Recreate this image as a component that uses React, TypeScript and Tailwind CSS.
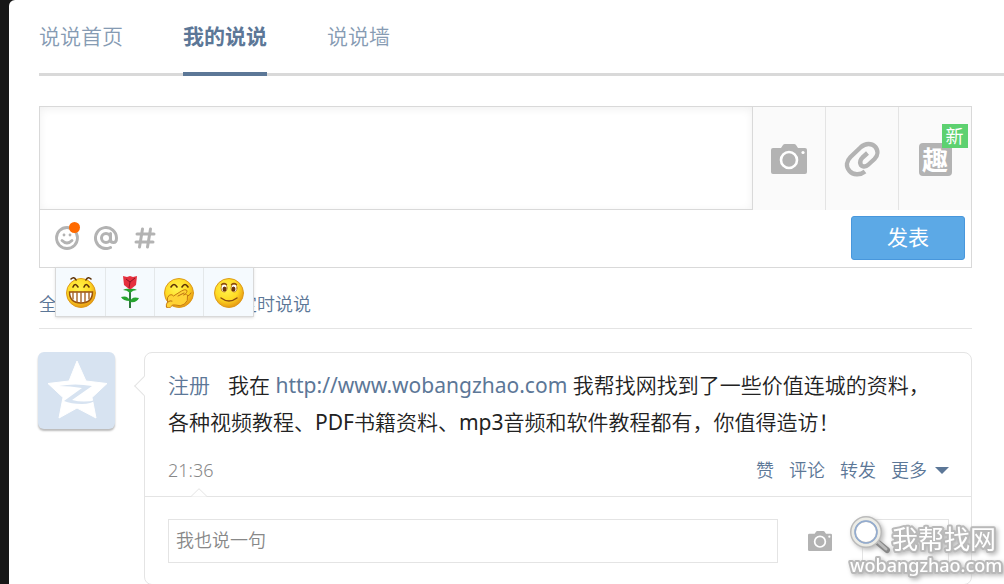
import type { ReactNode } from "react";

const tabs = [
  { label: "说说首页", active: false },
  { label: "我的说说", active: true },
  { label: "说说墙", active: false },
];

const filters = ["全部说说", "私密说说", "定时说说"];
const actions = ["赞", "评论", "转发"];

function CameraIcon({ className }: { className: string }) {
  return (
    <svg className={className} viewBox="0 0 36 32" fill="#b3b3b3">
      <path d="M2 5h8l2-3q.6-1 2-1h9q1.400 0 2 1l2 3h7q2 0 2 2v22q0 2-2 2H2q-2 0-2-2V7q0-2 2-2Z" />
      <circle cx="18" cy="17" r="8" fill="none" stroke="#fff" strokeWidth="2.600" />
      <circle cx="32" cy="9.500" r="1.600" fill="#fff" />
    </svg>
  );
}

function ClipIcon() {
  return (
    <svg className="h-9 w-9" viewBox="0 0 36 36" fill="none" stroke="#b3b3b3" strokeWidth="4.400" strokeLinejoin="round">
      <path d="M21 30.500C16 34.500 9 34 5.500 30C1.500 25.500 2.500 20 6.500 16L17 6C21.500 2 27.500 2 31 5.500C34.500 9.500 34 14.500 30.500 18L24.500 23.500C21.500 26.500 17.500 26 16.500 23C15.500 20.500 16.500 18.500 18.500 16.500L23.500 12" />
    </svg>
  );
}

function FunIcon() {
  return (
    <span className="relative flex h-[33px] w-[33px] items-center justify-center rounded bg-[#b3b3b3] text-[26px] leading-none font-bold text-white">
      趣
      <span className="absolute -top-[19px] left-[23px] flex h-6 w-[26px] items-center justify-center bg-[#5dd170] text-[18px] leading-none font-normal">
        新
      </span>
    </span>
  );
}

function SmileIcon({ className }: { className: string }) {
  return (
    <svg className={className} viewBox="0 0 24 24" fill="none" stroke="#b3b3b3" strokeWidth="2.800" strokeLinecap="round">
      <circle cx="12" cy="12" r="10.500" />
      <path d="M7 14.500q5 5 10 0" />
      <path d="M9 8.800v.2M15 8.800v.2" />
    </svg>
  );
}

function Face({ children }: { children: ReactNode }) {
  return (
    <svg className="h-8 w-8" viewBox="0 0 32 32" fill="none" strokeLinecap="round">
      <defs>
        <radialGradient id="face" cx=".42" cy=".35" r=".65">
          <stop offset="0" stopColor="#fff34f" />
          <stop offset=".6" stopColor="#ffdc25" />
          <stop offset="1" stopColor="#e89a13" />
        </radialGradient>
      </defs>
      <circle cx="16" cy="17" r="14.500" fill="url(#face)" stroke="#dd9b1c" />
      {children}
    </svg>
  );
}

function GrinFace() {
  return (
    <Face>
      <path d="M6 3q3-3 5 1M21 4q2-4 5-1M8 11q2-5 5 0M19 11q2-5 5 0" stroke="#5c3208" strokeWidth="1.600" />
      <path d="M4.500 16h23q0 11-11.500 11T4.500 16Z" fill="#fff" stroke="#98510c" strokeWidth="1.500" />
      <path d="M8 16v7M12 16v10M16 16v11M20 16v10M24 16v7" stroke="#a86526" strokeWidth="1.400" />
    </Face>
  );
}

function Rose() {
  return (
    <svg className="h-8 w-8" viewBox="0 0 32 32">
      <path d="M16 13v19" stroke="#176b25" strokeWidth="1.800" />
      <path d="M9 14q3-2 7-1q4-1 7 1q-4 0-7 3q-3-3-7-3ZM7 21q7-2 9 4q-7 0-9-4ZM16 26q1-6 9-4q-2 5-9 4Z" fill="#26a52f" />
      <path d="M9 0l4 1 3-1 3 1 4-1-1 9-5 4h-2l-5-4Z" fill="#e5303e" />
      <path d="M12 3l4 3 5-4M16 6l-1 6" stroke="#8f1423" fill="none" />
    </svg>
  );
}

function GiggleFace() {
  return (
    <Face>
      <path d="M8 11q3-5 6 0M19 11q3-5 6 0" stroke="#5c3208" strokeWidth="1.600" />
      <path d="M3.500 31q-1-2 1-5-1-5 2-7 3-1 4 1l8-5q3-2 5-1 2 2-3 5 4-2 4 1 1 5-3 8-4 3-9 1-3-1-5 2-1 2-4 0Z" fill="#ffd336" stroke="#c67b12" />
      <path d="m15 20 6-3M5 26q2-2 4-1M25 20q2-1 3-3" stroke="#b96f12" />
    </Face>
  );
}

function SmileFace() {
  return (
    <Face>
      <ellipse cx="11" cy="12" rx="3" ry="4" fill="#fff" stroke="#c68e2a" />
      <ellipse cx="21" cy="12" rx="3" ry="4" fill="#fff" stroke="#c68e2a" />
      <ellipse cx="11.500" cy="13" rx="2" ry="2.600" fill="#6a3508" />
      <ellipse cx="20.500" cy="13" rx="2" ry="2.600" fill="#6a3508" />
      <path d="M8.500 8.500q2.500-2 5 0M18.500 8.500q2.500-2 5 0M8 22q8 6 16 0" stroke="#8a4a10" strokeWidth="1.400" />
    </Face>
  );
}

const faces = [
  { name: "grin", icon: <GrinFace /> },
  { name: "rose", icon: <Rose /> },
  { name: "giggle", icon: <GiggleFace /> },
  { name: "smile", icon: <SmileFace /> },
];

function Composer() {
  return (
    <form className="relative border border-[#d9d9d9]">
      <div className="flex h-[103px]">
        <textarea
          aria-label="说说内容"
          className="min-w-0 flex-1 resize-none border-r border-b border-[#d9d9d9] p-2 shadow-[inset_0_2px_8px_#f0f0f0] outline-none"
        />
        <button type="button" aria-label="图片" className="flex w-[72px] items-center justify-center bg-[#fafafa] pt-[1px]">
          <CameraIcon className="h-8 w-9" />
        </button>
        <button type="button" aria-label="附件" className="flex w-[73px] items-center justify-center border-l border-[#e4e4e4] bg-[#fafafa] pt-[1px]">
          <ClipIcon />
        </button>
        <button type="button" className="flex w-[73px] items-center justify-center border-l border-[#e4e4e4] bg-[#fafafa] pt-[2px]">
          <FunIcon />
        </button>
      </div>
      <div className="flex h-[57px] items-center justify-between pr-[6px] pb-[1px] pl-[15px]">
        <div className="flex items-center gap-[15px] text-[#b3b3b3]">
          <button type="button" aria-label="表情" className="relative">
            <SmileIcon className="h-6 w-6" />
            <span className="absolute -top-1 -right-px h-[11px] w-[11px] rounded-full bg-[#ff6a00]" />
          </button>
          <button type="button" aria-label="提到">
            <svg className="h-6 w-6" viewBox="0 0 24 24" fill="none" stroke="currentColor" strokeWidth="3" strokeLinecap="round">
              <circle cx="12" cy="12" r="4.500" />
              <path d="M16.500 7.500v6q0 3 3 3t3-4.500a10.500 10.500 0 1 0-6 9.500" />
            </svg>
          </button>
          <button type="button" aria-label="话题">
            <svg className="h-6 w-6" viewBox="0 0 24 24" fill="none" stroke="currentColor" strokeWidth="3" strokeLinecap="round">
              <path d="M4 8h17M3 16h17M9.500 3l-3 18M17.500 3l-3 18" />
            </svg>
          </button>
        </div>
        <button type="button" className="h-11 w-[114px] rounded-[3px] border border-[#4897dc] bg-[#5ca9e6] text-[21px] font-normal text-white">
          发表
        </button>
      </div>
      <div className="absolute top-full left-[15px] flex border border-[#d9d9d9] bg-[#f5fafe] shadow-sm">
        {faces.map((face) => (
          <button
            key={face.name}
            type="button"
            aria-label={face.name}
            className="flex h-12 w-[49px] items-center justify-center border-l border-[#e4e8ea] first:border-l-0 last:w-[50px]"
          >
            {face.icon}
          </button>
        ))}
      </div>
    </form>
  );
}

function Avatar() {
  return (
    <svg className="h-[77px] w-[77px] shrink-0 rounded-md bg-[#d7e3f1] shadow-[0_2px_2px_#bbb]" viewBox="0 0 77 77">
      <path d="M39 9l9 20 21 2.500-15 14 4 20.500-19-10-18 10 4-20.500-15-14 21-2.500Z" fill="#fff" stroke="#fff" strokeWidth="1" strokeLinejoin="round" />
      <path d="M21 34q16-3 33 0L34 48q12 3 24 0-5 4-14 4-11 0-18-3l18-13q-12-2-23-2Z" fill="#d7e3f1" />
    </svg>
  );
}

function Post() {
  return (
    <article className="mt-[23px] -ml-px flex items-start gap-[29px]">
      <Avatar />
      <div className="relative min-w-0 flex-1 rounded-lg border border-[#e4e4e4]">
        <span className="absolute top-[26px] -left-[8px] h-[14px] w-[14px] rotate-45 border-b border-l border-[#e4e4e4] bg-white" />
        <div className="pt-[14px] pr-[22px] pl-[23px]">
          <p className="pr-2 text-[21px] leading-[37px] text-[#222]">
            <a href="#" className="mr-[18px] text-[#5c7797]">注册</a>
            我在 <a href="#" className="font-normal text-[#5c7797]">http://www.wobangzhao.com</a> 我帮找网找到了一些价值连城的资料，各种视频教程、<span className="font-normal">PDF</span>书籍资料、<span className="font-normal">mp3</span>音频和软件教程都有，你值得造访！
          </p>
          <div className="mt-2 mb-[5px] flex h-[42px] items-center justify-between text-[18px]">
            <time className="text-[#888]">21:36</time>
            <div className="flex items-center gap-[15px] text-[#5c7797]">
              {actions.map((action) => (
                <button key={action} type="button">{action}</button>
              ))}
              <button type="button" className="flex items-center gap-2">
                更多
                <svg className="h-[7px] w-[14px]" viewBox="0 0 14 7" fill="currentColor"><path d="M0 0h14L7 7Z" /></svg>
              </button>
            </div>
          </div>
        </div>
        <div className="relative border-t border-[#e4e4e4] pt-[22px] pr-[22px] pb-[21px] pl-[23px]">
          <svg className="absolute -top-[9px] left-[46px] h-[9px] w-4" viewBox="0 0 16 9" fill="#fff" stroke="#e4e4e4">
            <path d="M0 8.500 8 .7l8 7.800" />
          </svg>
          <div className="flex h-11">
            <input
              type="text"
              aria-label="评论内容"
              placeholder="我也说一句"
              className="min-w-0 flex-1 border border-[#e4e4e4] px-[7px] pb-[2px] text-[18px] outline-none placeholder:text-[#888]"
            />
            <button type="button" aria-label="图片" className="flex w-[84px] items-center justify-center">
              <CameraIcon className="h-6 w-6" />
            </button>
            <button type="button" aria-label="表情" className="flex w-[87px] items-center justify-center border border-[#e4e4e4]">
              <CameraIcon className="h-6 w-6" />
            </button>
          </div>
        </div>
      </div>
    </article>
  );
}

function Watermark() {
  return (
    <svg className="pointer-events-none absolute right-0 bottom-[2px] h-[68px] w-[156px] drop-shadow-[2px_2px_2px_#bbb]" viewBox="0 0 156 68">
      <path d="m28 26 11 9" stroke="#888" strokeWidth="6" strokeLinecap="round" />
      <path d="m29 26 9 8" stroke="#bbb" strokeWidth="3" strokeLinecap="round" />
      <circle cx="18" cy="17" r="13" fill="#fff" stroke="#bbb" strokeWidth="6" />
      <circle cx="18" cy="17" r="13" fill="none" stroke="#ecece6" strokeWidth="3" />
      <circle cx="18" cy="17" r="11" fill="none" stroke="#91abd0" strokeWidth="1.500" />
      <g fill="#fff" stroke="#b9b9b9" strokeWidth="4" paintOrder="stroke" strokeLinejoin="round">
        <text x="44" y="34" fontSize="26" fontWeight="400">我帮找网</text>
        <text x="2" y="57" fontSize="18" fontWeight="500">wobangzhao.com</text>
      </g>
    </svg>
  );
}

export default function App() {
  return (
    <div className="min-h-screen bg-[#171717] pl-[9px] font-['Noto_Sans','Noto_Sans_CJK_SC',sans-serif] font-[350]">
      <main className="relative min-h-screen overflow-hidden rounded-tl-md bg-white pl-[30px]">
        <nav className="flex gap-[60px] text-[21px] shadow-[inset_0_-3px_#d9d9d9]">
          {tabs.map((tab) => (
            <a
              key={tab.label}
              href="#"
              className={
                tab.active
                  ? "flex h-[76px] items-center border-b-4 border-[#5c7797] pt-[2px] font-bold text-[#5c7797]"
                  : "flex h-[76px] items-center border-b-4 border-transparent pt-[2px] text-[#869bb3]"
              }
            >
              {tab.label}
            </a>
          ))}
        </nav>
        <div className="mt-[30px] mr-8">
          <Composer />
          <div className="flex h-[61px] items-center gap-7 border-b border-[#e4e4e4] pt-[13px] text-[18px] text-[#5c7797]">
            {filters.map((filter) => (
              <a key={filter} href="#">{filter}</a>
            ))}
          </div>
          <Post />
        </div>
        <Watermark />
      </main>
    </div>
  );
}
